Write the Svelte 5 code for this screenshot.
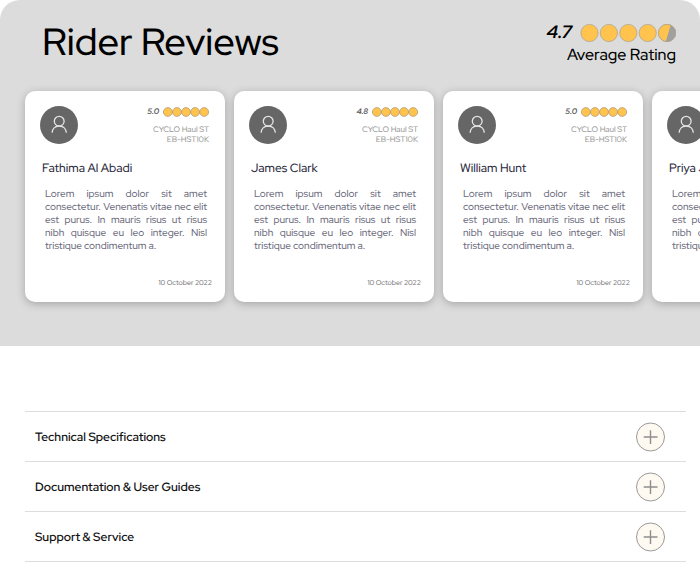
<script>
  const names = ['Fathima Al Abadi', 'James Clark', 'William Hunt', 'Priya Jain'];
  const scores = ['5.0', '4.8', '5.0', '4.9'];
  const reviews = names.map((name, i) => ({ name, score: scores[i] }));
  const text =
    'Lorem ipsum dolor sit amet consectetur. Venenatis vitae nec elit est purus. In mauris risus ut risus nibh quisque eu leo integer. Nisl tristique condimentum a.';
  const topics = ['Technical Specifications', 'Documentation & User Guides', 'Support & Service'];
  const wheels = [0, 1, 2, 3, 4];
</script>

<section class="reviews">
  <header>
    <h1>Rider Reviews</h1>
    <div class="average">
      <div class="total">
        <strong>4.7</strong>
        <svg width="96" height="20" viewBox="0 0 96 20" aria-hidden="true">
          {#each wheels as n}
            <circle cx={9.5 + n * 19.4} cy="10" r="8.6" fill={n === 4 ? '#a0a0a0' : '#ffc34e'} stroke="#a9a08c" stroke-width=".7" />
          {/each}
          <path d="M90.6 2.2A8.6 8.6 0 1 0 85.8 18.5Z" fill="#ffc34e" />
          <circle cx="87.1" cy="10" r="8.6" fill="none" stroke="#a9a08c" stroke-width=".7" />
        </svg>
      </div>
      <p>Average Rating</p>
    </div>
  </header>

  <div class="cards">
    {#each reviews as review}
      <article>
        <div class="top">
          <svg class="avatar" width="38" height="38" viewBox="0 0 38 38" aria-hidden="true">
            <circle cx="19" cy="19" r="19" fill="#666" />
            <g fill="none" stroke="#e4e4e4" stroke-width="1.3">
              <circle cx="19.2" cy="15.2" r="4.9" />
              <path d="M12.1 26.8C12.3 22.8 15 20 19.2 20S26.1 22.8 26.3 26.8" />
            </g>
          </svg>
          <div class="meta">
            <div class="score">
              <em>{review.score}</em>
              <svg width="46" height="10" viewBox="0 0 46 10" aria-hidden="true">
                {#each wheels as n}
                  <circle cx={4.8 + n * 9.1} cy="5" r="4.4" fill="#ffc34e" stroke="#a69775" stroke-width=".7" />
                {/each}
              </svg>
            </div>
            <p>CYCLO Haul ST<br />EB-HST10K</p>
          </div>
        </div>
        <h2>{review.name}</h2>
        <p class="text">{text}</p>
        <time datetime="2022-10-10">10 October 2022</time>
      </article>
    {/each}
  </div>
</section>

<section class="topics">
  {#each topics as topic}
    <button type="button" aria-expanded="false">
      <span>{topic}</span>
      <svg width="30" height="30" viewBox="0 0 30 30" aria-hidden="true">
        <circle cx="14.5" cy="15" r="14" fill="#fffaf1" stroke="#999" />
        <path d="M7.7 15H21.5M14.5 8.2V22" stroke="#8e8e8e" stroke-width="1.4" />
      </svg>
    </button>
  {/each}
</section>

<style>
  :global(body) {
    margin: 0;
    background: #fff;
    font-family: 'Red Hat Display', Inter, sans-serif;
    font-weight: 500;
    text-rendering: geometricPrecision;
  }
  h1, h2, p { margin: 0; font-weight: 500; }
  svg { display: block; flex: none; }
  .reviews {
    overflow: hidden;
    padding-bottom: 44px;
    border-radius: 20px 20px 0 0;
    background: #dcdcdc;
  }
  header {
    display: flex;
    justify-content: space-between;
    padding: 20px 24px 0 42px;
    height: 71px;
  }
  h1 { font-size: 38px; line-height: 44px; color: #000; }
  .average { padding-top: 3px; }
  .total {
    display: flex;
    align-items: center;
    justify-content: flex-end;
    gap: 8px;
    height: 20px;
  }
  .total strong { font-size: 18px; line-height: 20px; font-style: italic; font-weight: 700; }
  .average p { font-size: 16px; line-height: 24px; text-align: right; }
  .cards { display: flex; gap: 9px; padding-left: 25px; }
  article {
    box-sizing: border-box;
    display: flex;
    flex-direction: column;
    flex: none;
    width: 200px;
    height: 211px;
    padding: 15px 15px 13px;
    border-radius: 10px;
    background: #fff;
    box-shadow: 0 2px 8px rgb(0 0 0 / 25%);
  }
  .top { display: flex; justify-content: space-between; height: 38px; }
  .meta { padding-right: 1px; }
  .score { display: flex; align-items: center; justify-content: flex-end; gap: 4px; height: 12px; }
  .score em { font-size: 8px; font-weight: 700; color: #555; }
  .meta p {
    padding-top: 7px;
    font-size: 8px;
    line-height: 10px;
    text-align: right;
    color: #999;
  }
  h2 { padding: 16px 2px 0; font-size: 12px; line-height: 16px; color: #2b2b3d; }
  .text {
    padding: 12px 3px 0 5px;
    font-size: 10px;
    line-height: 13px;
    text-align: justify;
    color: #6c6c7d;
  }
  time {
    margin: auto -2px 0 0;
    font-size: 7px;
    line-height: 10px;
    text-align: right;
    color: #777;
  }
  .topics { margin: 65px 14px 0 25px; border-top: 1px solid #ddd; }
  button {
    display: flex;
    align-items: center;
    justify-content: space-between;
    width: 100%;
    height: 50px;
    padding: 0 20px 0 10px;
    border: 0;
    border-bottom: 1px solid #ddd;
    background: none;
    font-family: inherit;
    font-size: 12px;
    font-weight: 600;
    text-align: left;
    text-rendering: inherit;
    color: #111;
  }
</style>
